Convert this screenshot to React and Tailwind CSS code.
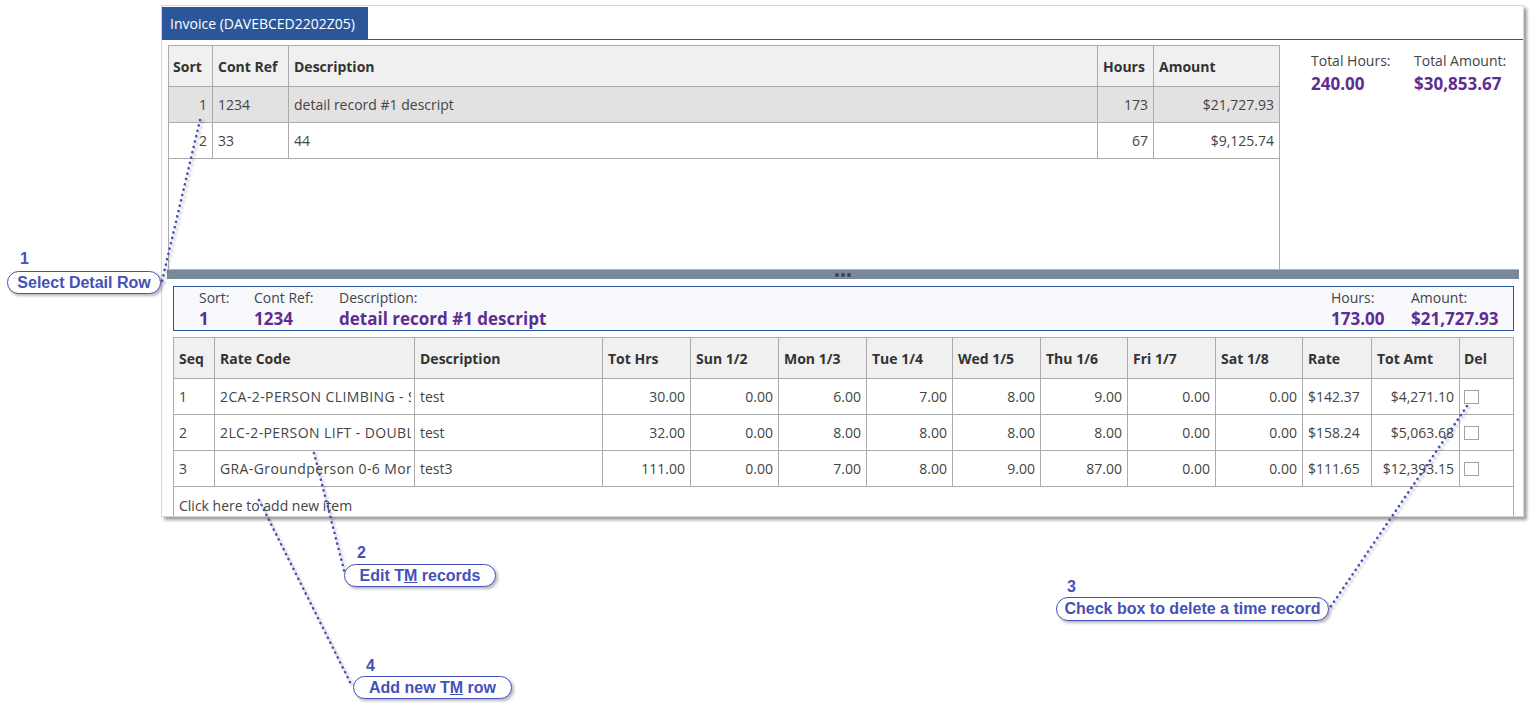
import React from "react";

const BLUE = "#4451b8";

const topCols = [
  { w: "w-[44px]", label: "Sort", align: "right", first: true },
  { w: "w-[76px]", label: "Cont Ref" },
  { w: "w-[809px]", label: "Description" },
  { w: "w-[56px]", label: "Hours", align: "right" },
  { w: "w-[125px]", label: "Amount", align: "right", last: true },
];

const topRows = [
  { cells: ["1", "1234", "detail record #1 descript", "173", "$21,727.93"], selected: true },
  { cells: ["2", "33", "44", "67", "$9,125.74"] },
];

const botCols = [
  { w: "w-[41px]", label: "Seq" },
  { w: "w-[200px]", label: "Rate Code", clip: true },
  { w: "w-[188px]", label: "Description" },
  { w: "w-[88px]", label: "Tot Hrs", align: "right" },
  { w: "w-[88px]", label: "Sun 1/2", align: "right" },
  { w: "w-[88px]", label: "Mon 1/3", align: "right" },
  { w: "w-[86px]", label: "Tue 1/4", align: "right" },
  { w: "w-[88px]", label: "Wed 1/5", align: "right" },
  { w: "w-[87px]", label: "Thu 1/6", align: "right" },
  { w: "w-[88px]", label: "Fri 1/7", align: "right" },
  { w: "w-[87px]", label: "Sat 1/8", align: "right" },
  { w: "w-[69px]", label: "Rate" },
  { w: "w-[88px]", label: "Tot Amt", align: "right" },
];

const botRows = [
  ["1", "2CA-2-PERSON CLIMBING - S", "test", "30.00", "0.00", "6.00", "7.00", "8.00", "9.00", "0.00", "0.00", "$142.37", "$4,271.10"],
  ["2", "2LC-2-PERSON LIFT - DOUBL", "test", "32.00", "0.00", "8.00", "8.00", "8.00", "8.00", "0.00", "0.00", "$158.24", "$5,063.68"],
  ["3", "GRA-Groundperson 0-6 Mon", "test3", "111.00", "0.00", "7.00", "8.00", "9.00", "87.00", "0.00", "0.00", "$111.65", "$12,393.15"],
];

function Callout({ num, numX, numY, x, y, w, h, children }) {
  return (
    <>
      <div
        className="absolute text-[16px] font-bold leading-[16px] text-[#4451b8]"
        style={{ left: numX, top: numY - 2, fontFamily: '"Liberation Sans", Arial, sans-serif' }}
      >
        {num}
      </div>
      <div
        className="absolute flex items-center justify-center rounded-[12px] border border-[#4451b8] bg-white text-[16px] font-bold leading-[18px] text-[#4451b8] shadow-[2px_2px_3px_rgba(0,0,0,0.28)]"
        style={{ left: x, top: y, width: w, height: h, fontFamily: '"Liberation Sans", Arial, sans-serif' }}
      >
        {children}
      </div>
    </>
  );
}

function DotLine({ x1, y1, x2, y2 }) {
  return (
    <g>
      <line
        x1={x1 + 2}
        y1={y1 + 2}
        x2={x2 + 2}
        y2={y2 + 2}
        stroke="rgba(0,0,0,0.22)"
        strokeWidth="3"
        strokeLinecap="round"
        strokeDasharray="0.1 5.4"
        filter="url(#blur)"
      />
      <line
        x1={x1}
        y1={y1}
        x2={x2}
        y2={y2}
        stroke={BLUE}
        strokeWidth="2.6"
        strokeLinecap="round"
        strokeDasharray="0.1 5.4"
      />
    </g>
  );
}

export default function App() {
  return (
    <div
      className="relative h-[711px] w-[1532px] overflow-hidden bg-white pt-[5px] text-[14px] text-[#444]"
      style={{ fontFamily: '"Open Sans", "Noto Sans", sans-serif' }}
    >
      {/* Window panel */}
      <div className="ml-[161px] flex h-[512px] w-[1363px] flex-col overflow-hidden border border-[#d6d6d6] bg-white shadow-[3px_3px_3px_rgba(0,0,0,0.38)]">
        {/* Tab row */}
        <div className="flex h-[34px] shrink-0 items-start border-b border-[#2b579a]">
          <div className="-ml-px mt-[1px] flex h-[32px] w-[207px] items-center bg-[#2b579a] pl-[9px] text-[14px] text-white">
            Invoice (DAVEBCED2202Z05)
          </div>
        </div>

        {/* Top section */}
        <div className="flex shrink-0 pl-[6px] pt-[5px]">
          <div className="h-[224px] w-[1112px] border-x border-t border-[#ababab]">
            <div className="flex h-[41px] border-b border-[#ababab] bg-[#f0f0f0]">
              {topCols.map((c, i) => (
                <div
                  key={i}
                  className={`${c.w} flex items-center font-bold text-[#333] ${c.first ? "pl-[4px]" : "pl-[5px]"} ${c.last ? "" : "border-r border-[#ababab]"}`}
                >
                  {c.label}
                </div>
              ))}
            </div>
            {topRows.map((r, ri) => (
              <div key={ri} className={`flex h-[36px] border-b border-[#ababab] ${r.selected ? "bg-[#e2e2e2]" : "bg-white"}`}>
                {r.cells.map((v, i) => {
                  const c = topCols[i];
                  return (
                    <div
                      key={i}
                      className={`${c.w} flex items-center overflow-hidden whitespace-nowrap ${c.align === "right" ? "justify-end pr-[5px]" : "pl-[5px]"} ${c.last ? "" : "border-r border-[#ababab]"}`}
                    >
                      {v}
                    </div>
                  );
                })}
              </div>
            ))}
          </div>
          <div className="flex pl-[31px] pt-[6px]">
            <div className="w-[103px]">
              <div className="leading-[20px]">Total Hours:</div>
              <div className="mt-[2px] text-[17px] font-bold leading-[22px] text-[#5f2d91]">240.00</div>
            </div>
            <div>
              <div className="leading-[20px]">Total Amount:</div>
              <div className="mt-[2px] text-[17px] font-bold leading-[22px] text-[#5f2d91]">$30,853.67</div>
            </div>
          </div>
        </div>

        {/* Splitter */}
        <div className="ml-[5px] mr-[4px] flex h-[10px] shrink-0 items-center justify-center gap-[2px] border-t border-[#b4b4b4] bg-[#7a8999]">
          <span className="h-[4px] w-[4px] rounded-full bg-[#3c4550]" />
          <span className="h-[4px] w-[4px] rounded-full bg-[#3c4550]" />
          <span className="h-[4px] w-[4px] rounded-full bg-[#3c4550]" />
        </div>

        {/* Detail header */}
        <div className="shrink-0 pl-[11px] pr-[9px] pt-[7px]">
          <div className="flex h-[45px] justify-between border border-[#2b579a] bg-[#f7f9fd] pl-[25px] pt-[1px]">
            <div className="flex">
              <div className="w-[55px]">
                <div className="leading-[20px]">Sort:</div>
                <div className="text-[17px] font-bold leading-[22px] text-[#5f2d91]">1</div>
              </div>
              <div className="w-[85px]">
                <div className="leading-[20px]">Cont Ref:</div>
                <div className="text-[17px] font-bold leading-[22px] text-[#5f2d91]">1234</div>
              </div>
              <div>
                <div className="leading-[20px]">Description:</div>
                <div className="whitespace-nowrap text-[17px] font-bold leading-[22px] text-[#5f2d91]">detail record #1 descript</div>
              </div>
            </div>
            <div className="flex">
              <div className="w-[80px]">
                <div className="leading-[20px]">Hours:</div>
                <div className="text-[17px] font-bold leading-[22px] text-[#5f2d91]">173.00</div>
              </div>
              <div className="w-[102px]">
                <div className="leading-[20px]">Amount:</div>
                <div className="text-[17px] font-bold leading-[22px] text-[#5f2d91]">$21,727.93</div>
              </div>
            </div>
          </div>
        </div>

        {/* Time records grid */}
        <div className="shrink-0 pl-[11px] pr-[9px] pt-[6px]">
          <div className="border-x border-t border-[#ababab]">
            <div className="flex h-[41px] border-b border-[#ababab] bg-[#f0f0f0]">
              {botCols.map((c, i) => (
                <div key={i} className={`${c.w} flex items-center border-r border-[#ababab] pl-[5px] font-bold text-[#333]`}>
                  {c.label}
                </div>
              ))}
              <div className="flex flex-1 items-center pl-[4px] font-bold text-[#333]">Del</div>
            </div>
            {botRows.map((r, ri) => (
              <div key={ri} className="flex h-[36px] border-b border-[#ababab]">
                {r.map((v, i) => {
                  const c = botCols[i];
                  if (c.clip) {
                    return (
                      <div key={i} className={`${c.w} flex items-center border-r border-[#ababab] pl-[5px]`}>
                        <span className="block w-[191px] overflow-hidden whitespace-nowrap tracking-[0.4px]">{v}</span>
                      </div>
                    );
                  }
                  return (
                    <div
                      key={i}
                      className={`${c.w} flex items-center overflow-hidden whitespace-nowrap border-r border-[#ababab] ${c.align === "right" ? "justify-end pr-[5px]" : "pl-[5px]"}`}
                    >
                      {v}
                    </div>
                  );
                })}
                <div className="flex flex-1 items-center pl-[4px]">
                  <div className="h-[14px] w-[15px] border border-[#a3a3a3] bg-white" />
                </div>
              </div>
            ))}
            <div className="flex h-[36px] items-center pl-[5px]">Click here to add new item</div>
          </div>
        </div>
      </div>

      {/* Annotation lines */}
      <svg className="pointer-events-none absolute left-0 top-0" width="1532" height="711">
        <defs>
          <filter id="blur" x="-10%" y="-10%" width="120%" height="120%">
            <feGaussianBlur stdDeviation="0.8" />
          </filter>
        </defs>
        <DotLine x1={200} y1={120} x2={162} y2={281} />
        <DotLine x1={314} y1={453} x2={345} y2={574} />
        <DotLine x1={1467} y1={406} x2={1329} y2={609} />
        <DotLine x1={259} y1={500} x2={352} y2={686} />
      </svg>

      {/* Callouts */}
      <Callout num="1" numX={20} numY={253} x={7} y={271} w={154} h={23}>
        Select Detail Row
      </Callout>
      <Callout num="2" numX={357} numY={547} x={344} y={564} w={152} h={23}>
        <span>
          Edit T<span className="underline">M</span> records
        </span>
      </Callout>
      <Callout num="3" numX={1067} numY={581} x={1056} y={597} w={273} h={24}>
        Check box to delete a time record
      </Callout>
      <Callout num="4" numX={366} numY={660} x={353} y={676} w={159} h={23}>
        <span>
          Add new T<span className="underline">M</span> row
        </span>
      </Callout>
    </div>
  );
}
